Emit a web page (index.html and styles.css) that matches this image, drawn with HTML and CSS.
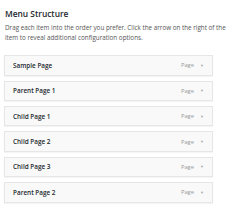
FILE: index.html
```html
<!DOCTYPE html>
<html lang="en">
<head>
  <meta charset="UTF-8">
  <title>Menu Structure</title>
  <link rel="stylesheet" href="styles.css">
</head>
<body>
  <div class="menu-panel">
    <h3 class="menu-title">Menu Structure</h3>
    <p class="menu-help">Drag each item into the order you prefer. Click the arrow on the right of the item to reveal additional configuration options.</p>

    <ul class="menu-list">
      <li class="menu-item">
        <span class="item-title">Sample Page</span>
        <span class="item-type">Page</span>
        <span class="item-arrow">&#9660;</span>
      </li>
      <li class="menu-item">
        <span class="item-title">Parent Page 1</span>
        <span class="item-type">Page</span>
        <span class="item-arrow">&#9660;</span>
      </li>
      <li class="menu-item">
        <span class="item-title">Child Page 1</span>
        <span class="item-type">Page</span>
        <span class="item-arrow">&#9660;</span>
      </li>
      <li class="menu-item">
        <span class="item-title">Child Page 2</span>
        <span class="item-type">Page</span>
        <span class="item-arrow">&#9660;</span>
      </li>
      <li class="menu-item">
        <span class="item-title">Child Page 3</span>
        <span class="item-type">Page</span>
        <span class="item-arrow">&#9660;</span>
      </li>
      <li class="menu-item">
        <span class="item-title">Parent Page 2</span>
        <span class="item-type">Page</span>
        <span class="item-arrow">&#9660;</span>
      </li>
    </ul>
  </div>
</body>
</html>
```

FILE: styles.css
```css
* {
  box-sizing: border-box;
  margin: 0;
  padding: 0;
}

body {
  font-family: 'Open Sans', 'Noto Sans', sans-serif;
  background: #fff;
  color: #23282d;
}

.menu-panel {
  padding: 8px 5px 0 5px;
}

.menu-title {
  font-size: 8.4px;
  font-weight: 600;
  line-height: 12px;
  color: #23282d;
  margin-bottom: 3px;
}

.menu-help {
  font-size: 6.3px;
  line-height: 9.6px;
  color: #555;
  margin-bottom: 13px;
}

.menu-list {
  list-style: none;
  width: 209px;
  margin-left: -1px;
}

.menu-item {
  display: flex;
  align-items: center;
  height: 20.4px;
  margin-bottom: 5px;
  padding: 0 8px 0 8px;
  background: #f9f9f9;
  border: 1px solid #e6e6e6;
  box-shadow: 0 1px 1px rgba(0, 0, 0, 0.04);
}

.item-title {
  flex: 1;
  font-size: 6.4px;
  font-weight: 600;
  color: #23282d;
}

.item-type {
  font-size: 5.8px;
  color: #999;
  margin-right: 6px;
}

.item-arrow {
  font-size: 4px;
  color: #aaa;
}
```
